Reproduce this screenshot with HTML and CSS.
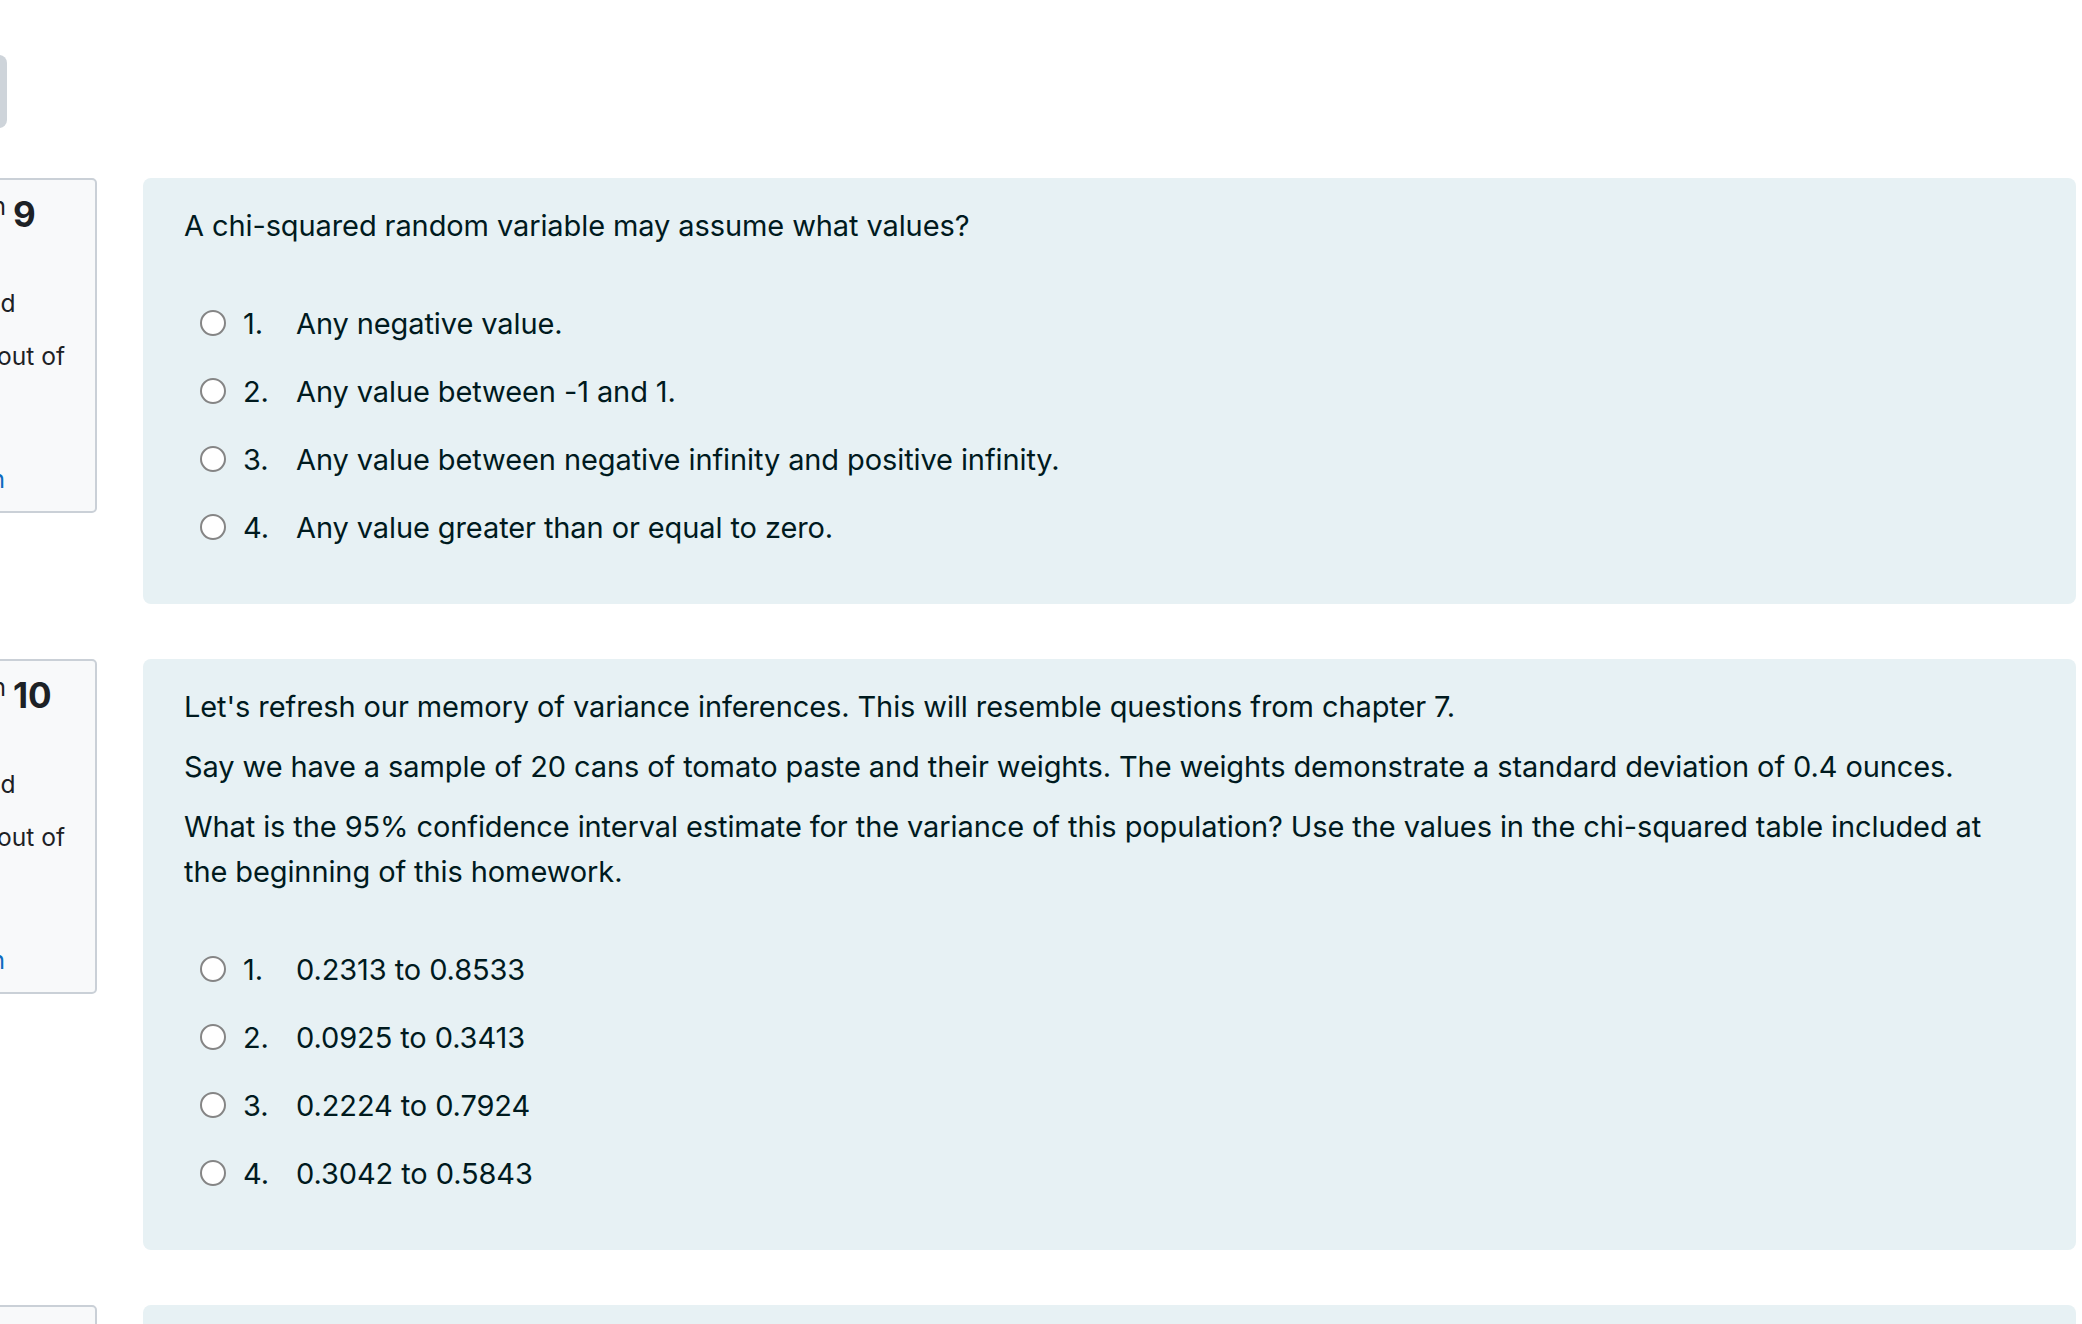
FILE: index.html
```html
<!DOCTYPE html>
<html lang="en">
<head>
  <meta charset="UTF-8" />
  <meta name="viewport" content="width=device-width, initial-scale=1.0" />
  <title>Homework Quiz</title>
  <link rel="stylesheet" href="styles.css">
</head>
<body>

<div class="page">
  <div class="topbar">
    <button class="nav-btn" type="button">Quiz navigation</button>
  </div>

  <form class="attempt" action="#" method="POST">

    <div class="que">
      <div class="info">
        <h3 class="no">Question <span class="qno">9</span></h3>
        <div class="state">Not yet answered</div>
        <div class="grade">Marked out of 1.00</div>
        <div class="flag">
          <a href="#"><svg class="flag-icon" viewBox="0 0 16 16" width="18" height="18"><path d="M3 1.5v13M3 2.5h9l-2 3 2 3H3" fill="none" stroke="#0f6cbf" stroke-width="1.4"/></svg>Flag question</a>
        </div>
      </div>
      <div class="content">
        <div class="formulation">
          <div class="qtext">
            <p>A chi-squared random variable may assume what values?</p>
          </div>
          <div class="answer">
            <label class="opt"><input type="radio" name="q9" value="0"><span class="num">1.</span><span>Any negative value.</span></label>
            <label class="opt"><input type="radio" name="q9" value="1"><span class="num">2.</span><span>Any value between -1 and 1.</span></label>
            <label class="opt"><input type="radio" name="q9" value="2"><span class="num">3.</span><span>Any value between negative infinity and positive infinity.</span></label>
            <label class="opt"><input type="radio" name="q9" value="3"><span class="num">4.</span><span>Any value greater than or equal to zero.</span></label>
          </div>
        </div>
      </div>
    </div>

    <div class="que">
      <div class="info">
        <h3 class="no">Question <span class="qno">10</span></h3>
        <div class="state">Not yet answered</div>
        <div class="grade">Marked out of 1.00</div>
        <div class="flag">
          <a href="#"><svg class="flag-icon" viewBox="0 0 16 16" width="18" height="18"><path d="M3 1.5v13M3 2.5h9l-2 3 2 3H3" fill="none" stroke="#0f6cbf" stroke-width="1.4"/></svg>Flag question</a>
        </div>
      </div>
      <div class="content">
        <div class="formulation">
          <div class="qtext">
            <p>Let's refresh our memory of variance inferences. This will resemble questions from chapter 7.</p>
            <p>Say we have a sample of 20 cans of tomato paste and their weights. The weights demonstrate a standard deviation of 0.4 ounces.</p>
            <p>What is the 95% confidence interval estimate for the variance of this population? Use the values in the chi-squared table included at the beginning of this homework.</p>
          </div>
          <div class="answer">
            <label class="opt"><input type="radio" name="q10" value="0"><span class="num">1.</span><span>0.2313 to 0.8533</span></label>
            <label class="opt"><input type="radio" name="q10" value="1"><span class="num">2.</span><span>0.0925 to 0.3413</span></label>
            <label class="opt"><input type="radio" name="q10" value="2"><span class="num">3.</span><span>0.2224 to 0.7924</span></label>
            <label class="opt"><input type="radio" name="q10" value="3"><span class="num">4.</span><span>0.3042 to 0.5843</span></label>
          </div>
        </div>
      </div>
    </div>

    <div class="que">
      <div class="info">
        <h3 class="no">Question <span class="qno">11</span></h3>
        <div class="state">Not yet answered</div>
        <div class="grade">Marked out of 1.00</div>
      </div>
      <div class="content">
        <div class="formulation"></div>
      </div>
    </div>

  </form>
</div>

</body>
</html>
```

FILE: styles.css
```css
/* General Styling */
body {
  font-family: Inter, "Liberation Sans", sans-serif;
  background-color: #ffffff;
  color: #1d2125;
  margin: 0;
  padding: 0;
  overflow: hidden;
}

.page {
  padding-top: 55px;
}

/* Top bar */
.topbar {
  margin-bottom: 50px;
}

.nav-btn {
  display: block;
  width: 150px;
  height: 73px;
  margin-left: -143px;
  background-color: #ced4da;
  border: none;
  border-radius: 8px;
  color: transparent;
  font-size: 24px;
}

/* Question block */
.que {
  display: flex;
  align-items: flex-start;
  margin-bottom: 55px;
}

.que .info {
  flex: 0 0 auto;
  width: 179px;
  margin-left: -114px;
  padding: 14px;
  background-color: #f8f9fa;
  border: 2px solid #cad0d7;
  border-radius: 5px;
  font-size: 24.6px;
  line-height: 36px;
}

.info .no {
  margin: 0 0 23px;
  font-size: 24.6px;
  font-weight: normal;
  line-height: 24px;
}

.info .qno {
  font-size: 35px;
  font-weight: bold;
  vertical-align: -12px;
}

.info .state {
  margin-bottom: 17px;
}

.info .grade {
  margin-bottom: 15px;
}

.info .flag a {
  color: #0f6cbf;
  text-decoration: none;
  letter-spacing: 0.4px;
}

.flag-icon {
  vertical-align: -2px;
  margin-right: 8px;
}

.que .content {
  flex: 1;
  margin-left: 46px;
  margin-right: 6px;
}

/* Question text and answers */
.formulation {
  background-color: #e7f1f4;
  color: #001a1e;
  border-radius: 8px;
  padding: 25px 50px 43px 41px;
  font-size: 29px;
  letter-spacing: -0.1px;
  line-height: 45px;
  min-height: 100px;
}

.qtext {
  margin-bottom: 41px;
}

.qtext p {
  margin: 0 0 15px;
}

.answer .opt {
  display: flex;
  align-items: center;
  padding: 11.5px 0 11.5px 16px;
}

.opt input {
  appearance: none;
  width: 26px;
  height: 26px;
  margin: 0 17px 0 0;
  border: 2px solid #858585;
  border-radius: 50%;
  background-color: #ffffff;
  box-sizing: border-box;
}

.opt .num {
  width: 53px;
  flex: 0 0 auto;
}
```
